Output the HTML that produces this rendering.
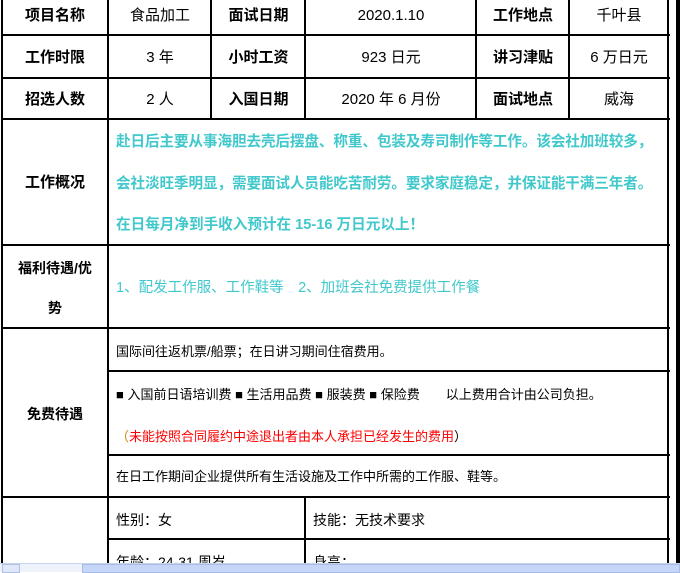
<!DOCTYPE html>
<html><head><meta charset="utf-8"><style>
body{margin:0;width:680px;height:571px;overflow:hidden;background:#fff;position:relative;font-family:"Liberation Sans","Noto Sans CJK SC",sans-serif;color:#000}
.h{position:absolute;background:#000;height:2px}
.v{position:absolute;background:#000;width:2px}
.t{position:absolute;white-space:nowrap;font-size:15px;line-height:20px}
.c{text-align:center}
.b{font-weight:bold}
.cy{color:#40c8cc}
.s{font-size:13px}
</style></head><body>
<div class="h" style="left:1px;top:34px;width:669px"></div>
<div class="h" style="left:1px;top:77px;width:669px"></div>
<div class="h" style="left:1px;top:118px;width:669px"></div>
<div class="h" style="left:1px;top:244px;width:669px"></div>
<div class="h" style="left:1px;top:327px;width:669px"></div>
<div class="h" style="left:107px;top:370px;width:563px"></div>
<div class="h" style="left:107px;top:454px;width:563px"></div>
<div class="h" style="left:1px;top:496px;width:669px"></div>
<div class="h" style="left:107px;top:538px;width:563px"></div>
<div class="v" style="left:1px;top:0;height:571px"></div>
<div class="v" style="left:107px;top:0;height:571px"></div>
<div class="v" style="left:210px;top:0;height:119px"></div>
<div class="v" style="left:304px;top:0;height:119px"></div>
<div class="v" style="left:304px;top:497px;height:74px"></div>
<div class="v" style="left:475px;top:0;height:119px"></div>
<div class="v" style="left:568px;top:0;height:119px"></div>
<div class="v" style="left:667px;top:0;height:571px"></div>
<div style="position:absolute;left:676px;top:0;width:4px;height:563px;background:#000"></div>

<div class="t c b" style="left:2px;width:106px;top:6px">项目名称</div>
<div class="t c" style="left:109px;width:102px;top:6px">食品加工</div>
<div class="t c b" style="left:212px;width:93px;top:6px">面试日期</div>
<div class="t c" style="left:306px;width:170px;top:6px">2020.1.10</div>
<div class="t c b" style="left:477px;width:92px;top:6px">工作地点</div>
<div class="t c" style="left:570px;width:98px;top:6px">千叶县</div>

<div class="t c b" style="left:2px;width:106px;top:48px">工作时限</div>
<div class="t c" style="left:109px;width:102px;top:48px">3 年</div>
<div class="t c b" style="left:212px;width:93px;top:48px">小时工资</div>
<div class="t c" style="left:306px;width:170px;top:48px">923 日元</div>
<div class="t c b" style="left:477px;width:92px;top:48px">讲习津贴</div>
<div class="t c" style="left:570px;width:98px;top:48px">6 万日元</div>

<div class="t c b" style="left:2px;width:106px;top:90px">招选人数</div>
<div class="t c" style="left:109px;width:102px;top:90px">2 人</div>
<div class="t c b" style="left:212px;width:93px;top:90px">入国日期</div>
<div class="t c" style="left:306px;width:170px;top:90px">2020 年 6 月份</div>
<div class="t c b" style="left:477px;width:92px;top:90px">面试地点</div>
<div class="t c" style="left:570px;width:98px;top:90px">威海</div>

<div class="t c b" style="left:2px;width:106px;top:173px">工作概况</div>
<div class="t b cy" style="left:116px;top:132px;font-size:14.6px;letter-spacing:-0.1px">赴日后主要从事海胆去壳后摆盘、称重、包装及寿司制作等工作。该会社加班较多，</div>
<div class="t b cy" style="left:116px;top:174px;font-size:14.6px;letter-spacing:-0.1px">会社淡旺季明显，需要面试人员能吃苦耐劳。要求家庭稳定，并保证能干满三年者。</div>
<div class="t b cy" style="left:116px;top:215px;font-size:14.6px">在日每月净到手收入预计在 15-16 万日元以上！</div>

<div class="t c b" style="left:2px;width:106px;top:258px;font-size:14px">福利待遇/优</div>
<div class="t c b" style="left:2px;width:106px;top:298px;font-size:14px">势</div>
<div class="t cy" style="left:116px;top:278px;font-size:14.5px">1、配发工作服、工作鞋等　2、加班会社免费提供工作餐</div>

<div class="t c b" style="left:2px;width:106px;top:404px;font-size:14px">免费待遇</div>
<div class="t s" style="left:116px;top:342px">国际间往返机票/船票；在日讲习期间住宿费用。</div>
<div class="t s" style="left:116px;top:385px">■ 入国前日语培训费 ■ 生活用品费 ■ 服装费 ■ 保险费　　以上费用合计由公司负担。</div>
<div class="t s" style="left:116px;top:427px;color:#f00"><span style="color:#c80">（</span>未能按照合同履约中途退出者由本人承担已经发生的费用<span style="color:#000">）</span></div>
<div class="t s" style="left:116px;top:467px">在日工作期间企业提供所有生活设施及工作中所需的工作服、鞋等。</div>

<div class="t" style="left:116px;top:510px;font-size:14px">性别：女</div>
<div class="t" style="left:313px;top:510px;font-size:14px">技能：无技术要求</div>
<div class="t" style="left:116px;top:552px;font-size:14px">年龄：24-31 周岁</div>
<div class="t" style="left:313px;top:552px;font-size:14px">身高：</div>

<div style="position:absolute;left:0;top:563px;width:680px;height:8px;background:#eef2fb;border-top:1px solid #c8d4ee"></div>
<div style="position:absolute;left:2px;top:564px;width:16px;height:7px;background:#dfe8fb;border:1px solid #b0c0e0"></div>
<div style="position:absolute;left:82px;top:564px;width:596px;height:7px;background:#c6d6f8;border:1px solid #a8bce8"></div>
</body></html>
